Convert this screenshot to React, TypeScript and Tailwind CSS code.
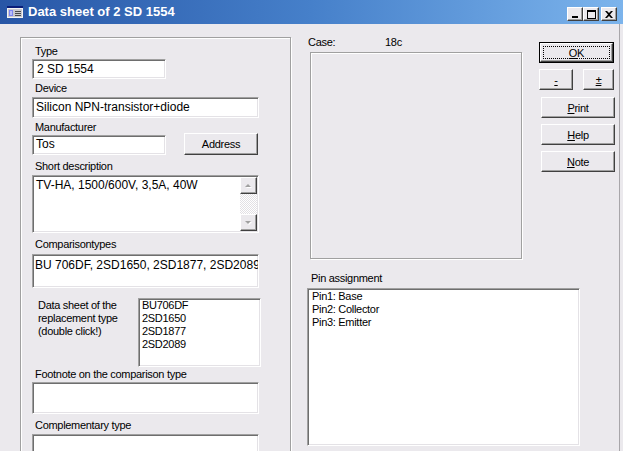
import React from "react";

const sunken =
  "shrink-0 bg-white border border-t-[#a0a0a0] border-l-[#a0a0a0] border-r-white border-b-white shadow-[inset_1px_1px_0_#6e6e6e,inset_-1px_-1px_0_#e4e2e6]";
const raised =
  "bg-[#ebe9ed] border border-t-white border-l-white border-r-[#404040] border-b-[#404040] shadow-[inset_-1px_-1px_0_#a0a0a0]";
const etched =
  "border border-[#a0a0a0] shadow-[1px_1px_0_#fff,inset_1px_1px_0_#fff]";
const label = "shrink-0 text-[11px] tracking-[-0.3px] leading-[14px] h-[14px] whitespace-nowrap";

const Arrow: React.FC<{ up?: boolean }> = ({ up }) => (
  <svg width="9" height="6" viewBox="0 0 9 6">
    {up ? (
      <>
        <path d="M2 5h6L5 2z" fill="#fff" />
        <path d="M1 4h6L4 1z" fill="#a0a0a0" />
      </>
    ) : (
      <>
        <path d="M2 2h6L5 5z" fill="#fff" />
        <path d="M1 1h6L4 4z" fill="#a0a0a0" />
      </>
    )}
  </svg>
);

const Btn: React.FC<{ className?: string; children: React.ReactNode }> = ({ className = "", children }) => (
  <div className={`${raised} ${className} shrink-0 flex items-center justify-center text-[11px] tracking-[-0.3px] leading-[14px]`}>
    {children}
  </div>
);

const TitleBtn: React.FC<{ children: React.ReactNode }> = ({ children }) => (
  <div className={`${raised} w-[16px] h-[14px] flex items-center justify-center`}>{children}</div>
);

export default function App() {
  return (
    <div className="w-[623px] h-[451px] overflow-hidden bg-[#ebe9ed] text-black font-['Liberation_Sans',Arial,sans-serif]">
      {/* Title bar */}
      <div className="h-[24px] flex items-start bg-gradient-to-r from-[#2856a6] via-[#4680ca] to-[#7cb4ec]">
        <svg className="mt-[6px] ml-[7px]" width="16" height="12" viewBox="0 0 16 12">
          <rect x="0" y="0" width="16" height="12" fill="#f4f4f4" />
          <rect x="0" y="0" width="16" height="2" fill="#0a1e7a" />
          <rect x="1" y="3" width="14" height="8" fill="#c9c9cf" />
          <rect x="2" y="4" width="4" height="6" fill="#7e86f2" />
          <rect x="3" y="5" width="2" height="4" fill="#b7bcfb" />
          <rect x="8" y="5" width="6" height="1" fill="#4a4a4a" />
          <rect x="8" y="7" width="6" height="1" fill="#4a4a4a" />
          <rect x="8" y="9" width="6" height="1" fill="#4a4a4a" />
        </svg>
        <div className="ml-[5px] mt-[4px] text-[13px] leading-[16px] font-bold text-white whitespace-nowrap">
          Data sheet of 2 SD 1554
        </div>
        <div className="ml-auto mt-[7px] mr-[6px] flex">
          <TitleBtn>
            <svg width="8" height="8" viewBox="0 0 8 8">
              <rect x="1" y="6" width="6" height="2" fill="#000" />
            </svg>
          </TitleBtn>
          <TitleBtn>
            <svg width="9" height="9" viewBox="0 0 9 9">
              <rect x="0.5" y="0.5" width="8" height="8" fill="none" stroke="#000" />
              <rect x="0" y="0" width="9" height="2" fill="#000" />
            </svg>
          </TitleBtn>
          <div className="ml-[2px]">
            <TitleBtn>
              <svg width="8" height="7" viewBox="0 0 8 7">
                <path d="M0 0h2l2 2 2-2h2L5 3.5 8 7H6L4 5 2 7H0l3-3.5z" fill="#000" />
              </svg>
            </TitleBtn>
          </div>
        </div>
      </div>

      {/* Client area */}
      <div className="h-[427px] flex">
        <div className="w-[20px] shrink-0" />

        {/* Left group */}
        <div className={`${etched} shrink-0 mt-[13px] w-[271px] h-[440px] flex flex-col pt-[6px] pl-[11px]`}>
          <div className={`${label} ml-[3px]`}>Type</div>
          <div className={`${sunken} mt-[1px] w-[134px] h-[20px] pl-[4px] pt-[2px] text-[12px] leading-[14px]`}>2 SD 1554</div>

          <div className={`${label} ml-[3px] mt-[2px]`}>Device</div>
          <div className={`${sunken} mt-[2px] w-[227px] h-[21px] pl-[3px] pt-[2px] text-[12px] leading-[14px] whitespace-nowrap`}>
            Silicon NPN-transistor+diode
          </div>

          <div className={`${label} ml-[3px] mt-[2px]`}>Manufacturer</div>
          <div className="shrink-0 flex items-start mt-[-1px]">
            <div className={`${sunken} mt-[2px] w-[134px] h-[20px] pl-[3px] pt-[1px] text-[12px] leading-[14px]`}>Tos</div>
            <Btn className="ml-[18px] w-[74px] h-[22px]">Address</Btn>
          </div>

          <div className={`${label} ml-[3px] mt-[4px]`}>Short description</div>
          <div className={`${sunken} mt-[2px] w-[227px] h-[58px] p-[1px] flex`}>
            <div className="flex-1 pl-[2px] pt-[1px] text-[12px] leading-[14px] whitespace-nowrap">TV-HA, 1500/600V, 3,5A, 40W</div>
            <div className="w-[17px] flex flex-col">
              <div className={`${raised} h-[17px] flex items-center justify-center`}>
                <Arrow up />
              </div>
              <div className="flex-1 bg-[repeating-conic-gradient(#ffffff_0_25%,#e2e0e4_0_50%)] bg-[length:2px_2px]" />
              <div className={`${raised} h-[17px] flex items-center justify-center`}>
                <Arrow />
              </div>
            </div>
          </div>

          <div className={`${label} ml-[3px] mt-[4px]`}>Comparisontypes</div>
          <div className={`${sunken} mt-[3px] w-[227px] h-[34px] pl-[2px] pt-[3px] text-[12px] leading-[14px] whitespace-nowrap overflow-hidden`}>
            BU 706DF, 2SD1650, 2SD1877, 2SD2089
          </div>

          <div className="shrink-0 flex mt-[10px]">
            <div className="ml-[6px] w-[100px] pt-[1px] text-[11px] tracking-[-0.3px] leading-[13px]">
              Data sheet of the
              <br />
              replacement type
              <br />
              (double click!)
            </div>
            <div className={`${sunken} w-[123px] h-[69px] pl-[3px] text-[11px] tracking-[-0.3px] leading-[13px]`}>
              <div>BU706DF</div>
              <div>2SD1650</div>
              <div>2SD1877</div>
              <div>2SD2089</div>
            </div>
          </div>

          <div className={`${label} ml-[3px]`}>Footnote on the comparison type</div>
          <div className={`${sunken} mt-[1px] w-[227px] h-[32px]`} />

          <div className={`${label} ml-[3px] mt-[4px]`}>Complementary type</div>
          <div className={`${sunken} mt-[2px] w-[227px] h-[30px]`} />
        </div>

        {/* Right area */}
        <div className="flex-1 flex flex-col pt-[11px] pl-[16px]">
          <div className="flex">
            <div className="w-[215px] flex flex-col">
              <div className={`${label} pl-[1px] flex`}>
                <span className="w-[77px]">Case:</span>
                <span>18c</span>
              </div>
              <div className={`${etched} ml-[3px] mt-[3px] w-[212px] h-[207px]`} />
            </div>

            <div className="ml-[17px] pt-[7px] flex flex-col">
              <div className="w-[75px] h-[21px] border border-black">
                <div className={`${raised} h-full p-[2px]`}>
                  <div className="h-full border border-dotted border-black flex items-center justify-center text-[11px] tracking-[-0.3px] leading-[14px]">
                    <span className="underline">O</span>K
                  </div>
                </div>
              </div>
              <div className="mt-[6px] w-[75px] flex justify-between">
                <Btn className="w-[34px] h-[21px]">
                  <span className="underline">-</span>
                </Btn>
                <Btn className="w-[31px] h-[21px]">
                  <span className="underline">±</span>
                </Btn>
              </div>
              <Btn className="mt-[7px] ml-[2px] w-[74px] h-[21px]">
                <span className="underline">P</span>rint
              </Btn>
              <Btn className="mt-[6px] ml-[2px] w-[74px] h-[21px]">
                <span className="underline">H</span>elp
              </Btn>
              <Btn className="mt-[6px] ml-[2px] w-[74px] h-[21px]">
                <span className="underline">N</span>ote
              </Btn>
            </div>
          </div>

          <div className={`${label} mt-[12px] pl-[4px]`}>Pin assignment</div>
          <div className={`${sunken} mt-[3px] w-[273px] h-[158px] pl-[4px] pt-[1px] text-[11px] tracking-[-0.3px] leading-[13px]`}>
            <div>Pin1: Base</div>
            <div>Pin2: Collector</div>
            <div>Pin3: Emitter</div>
          </div>
        </div>

        {/* Right frame */}
        <div className="w-[4px] shrink-0 border-l border-[#a8a6aa]" />
      </div>
    </div>
  );
}
